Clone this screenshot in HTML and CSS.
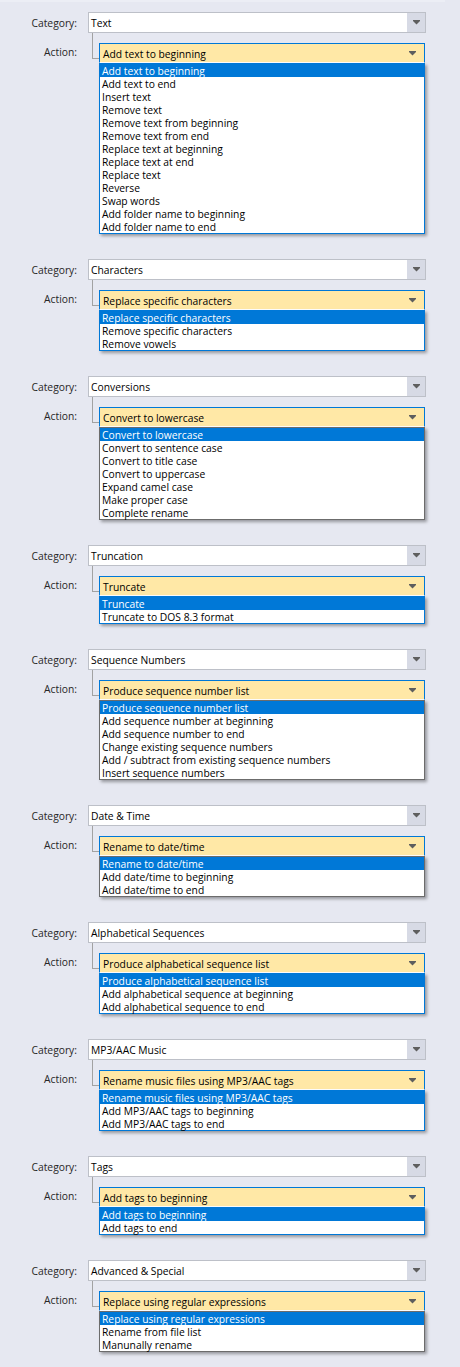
FILE: index.html
```html
<!DOCTYPE html>
<html>
<head>
<meta charset="utf-8">
<link rel="stylesheet" href="styles.css">
</head>
<body>
<div class="panel">

  <section class="group">
    <div class="row cat-row"><span class="label">Category:</span><div class="cat"><span class="val">Text</span><span class="btn"><svg width="7" height="5" viewBox="0 0 7 5"><path d="M0 0h7v1l-3.5 3.5L0 1z"/></svg></span></div></div>
    <div class="row act-row"><span class="label">Action:</span><div class="act-wrap"><div class="act"><span class="val">Add text to beginning</span><svg class="arr" width="7" height="5" viewBox="0 0 7 5"><path d="M0 0h7v1l-3.5 3.5L0 1z"/></svg></div>
      <ul class="list">
        <li class="sel">Add text to beginning</li><li>Add text to end</li><li>Insert text</li><li>Remove text</li><li>Remove text from beginning</li><li>Remove text from end</li><li>Replace text at beginning</li><li>Replace text at end</li><li>Replace text</li><li>Reverse</li><li>Swap words</li><li>Add folder name to beginning</li><li>Add folder name to end</li>
      </ul></div></div>
  </section>

  <section class="group">
    <div class="row cat-row"><span class="label">Category:</span><div class="cat"><span class="val">Characters</span><span class="btn"><svg width="7" height="5" viewBox="0 0 7 5"><path d="M0 0h7v1l-3.5 3.5L0 1z"/></svg></span></div></div>
    <div class="row act-row"><span class="label">Action:</span><div class="act-wrap"><div class="act"><span class="val">Replace specific characters</span><svg class="arr" width="7" height="5" viewBox="0 0 7 5"><path d="M0 0h7v1l-3.5 3.5L0 1z"/></svg></div>
      <ul class="list">
        <li class="sel">Replace specific characters</li><li>Remove specific characters</li><li>Remove vowels</li>
      </ul></div></div>
  </section>

  <section class="group">
    <div class="row cat-row"><span class="label">Category:</span><div class="cat"><span class="val">Conversions</span><span class="btn"><svg width="7" height="5" viewBox="0 0 7 5"><path d="M0 0h7v1l-3.5 3.5L0 1z"/></svg></span></div></div>
    <div class="row act-row"><span class="label">Action:</span><div class="act-wrap"><div class="act"><span class="val">Convert to lowercase</span><svg class="arr" width="7" height="5" viewBox="0 0 7 5"><path d="M0 0h7v1l-3.5 3.5L0 1z"/></svg></div>
      <ul class="list gray">
        <li class="sel">Convert to lowercase</li><li>Convert to sentence case</li><li>Convert to title case</li><li>Convert to uppercase</li><li>Expand camel case</li><li>Make proper case</li><li>Complete rename</li>
      </ul></div></div>
  </section>

  <section class="group">
    <div class="row cat-row"><span class="label">Category:</span><div class="cat"><span class="val">Truncation</span><span class="btn"><svg width="7" height="5" viewBox="0 0 7 5"><path d="M0 0h7v1l-3.5 3.5L0 1z"/></svg></span></div></div>
    <div class="row act-row"><span class="label">Action:</span><div class="act-wrap"><div class="act"><span class="val">Truncate</span><svg class="arr" width="7" height="5" viewBox="0 0 7 5"><path d="M0 0h7v1l-3.5 3.5L0 1z"/></svg></div>
      <ul class="list">
        <li class="sel">Truncate</li><li>Truncate to DOS 8.3 format</li>
      </ul></div></div>
  </section>

  <section class="group">
    <div class="row cat-row"><span class="label">Category:</span><div class="cat"><span class="val">Sequence Numbers</span><span class="btn"><svg width="7" height="5" viewBox="0 0 7 5"><path d="M0 0h7v1l-3.5 3.5L0 1z"/></svg></span></div></div>
    <div class="row act-row"><span class="label">Action:</span><div class="act-wrap"><div class="act"><span class="val">Produce sequence number list</span><svg class="arr" width="7" height="5" viewBox="0 0 7 5"><path d="M0 0h7v1l-3.5 3.5L0 1z"/></svg></div>
      <ul class="list gray">
        <li class="sel">Produce sequence number list</li><li>Add sequence number at beginning</li><li>Add sequence number to end</li><li>Change existing sequence numbers</li><li>Add / subtract from existing sequence numbers</li><li>Insert sequence numbers</li>
      </ul></div></div>
  </section>

  <section class="group">
    <div class="row cat-row"><span class="label">Category:</span><div class="cat"><span class="val">Date &amp; Time</span><span class="btn"><svg width="7" height="5" viewBox="0 0 7 5"><path d="M0 0h7v1l-3.5 3.5L0 1z"/></svg></span></div></div>
    <div class="row act-row"><span class="label">Action:</span><div class="act-wrap"><div class="act"><span class="val">Rename to date/time</span><svg class="arr" width="7" height="5" viewBox="0 0 7 5"><path d="M0 0h7v1l-3.5 3.5L0 1z"/></svg></div>
      <ul class="list gray">
        <li class="sel">Rename to date/time</li><li>Add date/time to beginning</li><li>Add date/time to end</li>
      </ul></div></div>
  </section>

  <section class="group">
    <div class="row cat-row"><span class="label">Category:</span><div class="cat"><span class="val">Alphabetical Sequences</span><span class="btn"><svg width="7" height="5" viewBox="0 0 7 5"><path d="M0 0h7v1l-3.5 3.5L0 1z"/></svg></span></div></div>
    <div class="row act-row"><span class="label">Action:</span><div class="act-wrap"><div class="act"><span class="val">Produce alphabetical sequence list</span><svg class="arr" width="7" height="5" viewBox="0 0 7 5"><path d="M0 0h7v1l-3.5 3.5L0 1z"/></svg></div>
      <ul class="list">
        <li class="sel">Produce alphabetical sequence list</li><li>Add alphabetical sequence at beginning</li><li>Add alphabetical sequence to end</li>
      </ul></div></div>
  </section>

  <section class="group">
    <div class="row cat-row"><span class="label">Category:</span><div class="cat"><span class="val">MP3/AAC Music</span><span class="btn"><svg width="7" height="5" viewBox="0 0 7 5"><path d="M0 0h7v1l-3.5 3.5L0 1z"/></svg></span></div></div>
    <div class="row act-row"><span class="label">Action:</span><div class="act-wrap"><div class="act"><span class="val">Rename music files using MP3/AAC tags</span><svg class="arr" width="7" height="5" viewBox="0 0 7 5"><path d="M0 0h7v1l-3.5 3.5L0 1z"/></svg></div>
      <ul class="list">
        <li class="sel">Rename music files using MP3/AAC tags</li><li>Add MP3/AAC tags to beginning</li><li>Add MP3/AAC tags to end</li>
      </ul></div></div>
  </section>

  <section class="group">
    <div class="row cat-row"><span class="label">Category:</span><div class="cat"><span class="val">Tags</span><span class="btn"><svg width="7" height="5" viewBox="0 0 7 5"><path d="M0 0h7v1l-3.5 3.5L0 1z"/></svg></span></div></div>
    <div class="row act-row"><span class="label">Action:</span><div class="act-wrap"><div class="act"><span class="val">Add tags to beginning</span><svg class="arr" width="7" height="5" viewBox="0 0 7 5"><path d="M0 0h7v1l-3.5 3.5L0 1z"/></svg></div>
      <ul class="list">
        <li class="sel">Add tags to beginning</li><li>Add tags to end</li>
      </ul></div></div>
  </section>

  <section class="group">
    <div class="row cat-row"><span class="label">Category:</span><div class="cat"><span class="val">Advanced &amp; Special</span><span class="btn"><svg width="7" height="5" viewBox="0 0 7 5"><path d="M0 0h7v1l-3.5 3.5L0 1z"/></svg></span></div></div>
    <div class="row act-row"><span class="label">Action:</span><div class="act-wrap"><div class="act"><span class="val">Replace using regular expressions</span><svg class="arr" width="7" height="5" viewBox="0 0 7 5"><path d="M0 0h7v1l-3.5 3.5L0 1z"/></svg></div>
      <ul class="list gray">
        <li class="sel">Replace using regular expressions</li><li>Rename from file list</li><li>Manunally rename</li>
      </ul></div></div>
  </section>

</div>
</body>
</html>
```

FILE: styles.css
```css
html, body {
  margin: 0;
  padding: 0;
  background: #e6e8f1;
}
body {
  font-family: "Open Sans", "Segoe UI", "Liberation Sans", sans-serif;
  font-size: 10.3px;
  color: #000;
}
.panel {
  width: 445px;
  padding-top: 10px;
  border-top: 2px solid #eceef5;
}
.group {
  margin-bottom: 25px;
}
.row {
  display: flex;
}
.cat-row {
  height: 21px;
  align-items: center;
}
.label {
  width: 78px;
  box-sizing: border-box;
  padding-right: 1px;
  text-align: right;
  color: #262626;
}
.cat {
  margin-left: 10px;
  width: 338px;
  height: 21px;
  box-sizing: border-box;
  border: 1px solid #bdc0c8;
  background: #fff;
  display: flex;
  align-items: center;
  padding-left: 2px;
}
.cat .val {
  padding-top: 1px;
}
.cat .btn {
  margin-left: auto;
  width: 18px;
  height: 19px;
  background: #d7dae5;
  display: flex;
  align-items: center;
  justify-content: center;
}
.cat svg, .arr {
  fill: #5e5e5e;
}
.act-row {
  margin-top: 10px;
  align-items: flex-start;
  position: relative;
}
.act-row::before {
  content: "";
  position: absolute;
  left: 92px;
  top: -10px;
  width: 7px;
  height: 26px;
  box-sizing: border-box;
  border-left: 1px solid #a2a2a2;
  border-bottom: 1px solid #a2a2a2;
}
.act-row .label {
  height: 20px;
  line-height: 18px;
}
.act-wrap {
  margin-left: 21px;
  width: 326px;
}
.act {
  height: 20px;
  box-sizing: border-box;
  border: 1px solid #0078d7;
  border-bottom-color: #fff;
  background: #ffe8a6;
  display: flex;
  align-items: center;
  padding: 0 8px 0 3px;
}
.act .val {
  padding-top: 2px;
}
.act .arr {
  margin-left: auto;
}
.list {
  margin: 0;
  padding: 0;
  list-style: none;
  border: 1px solid #0078d7;
  background: #fff;
  box-shadow: 2px 2px 3px rgba(0, 0, 0, 0.35);
}
.list.gray {
  border-color: #6c6c6c;
}
.list li {
  height: 13px;
  line-height: 15px;
  padding-left: 2px;
  white-space: nowrap;
  overflow: visible;
}
.list li.sel {
  background: #0078d7;
  color: #fff;
}
```
